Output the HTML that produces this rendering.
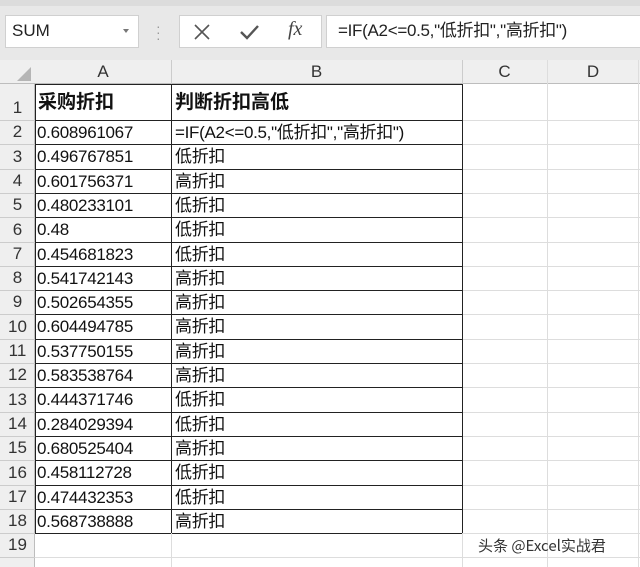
<!DOCTYPE html><html><head><meta charset="utf-8"><style>
html,body{margin:0;width:640px;height:567px;overflow:hidden}
body{background:#fff;font-family:"Liberation Sans","Noto Sans CJK SC",sans-serif;position:relative}
.a{position:absolute;box-sizing:border-box}
.t{font-size:17px;color:#111;white-space:nowrap;line-height:24px;height:24px}
.h{font-size:17px;color:#333;text-align:center}
</style></head><body>
<div class="a" style="left:0;top:0;width:640px;height:60px;background:#e8e8e8"></div>
<div class="a" style="left:0;top:0;width:640px;height:6px;background:#dcdcdc"></div>
<div class="a" style="left:5px;top:15px;width:134px;height:33px;background:#fff;border:1px solid #d0d0d0"></div>
<div class="a t" style="left:12px;top:19px;color:#222">SUM</div>
<div class="a" style="left:123px;top:29px;border-left:3px solid transparent;border-right:3px solid transparent;border-top:4px solid #777"></div>
<div class="a" style="left:156px;top:23px;color:#999;font-size:14px;line-height:6px">·<br>·<br>·</div>
<div class="a" style="left:179px;top:15px;width:143px;height:33px;background:#fff;border:1px solid #d0d0d0"></div>
<svg class="a" style="left:192px;top:22px" width="20" height="20"><path d="M3 3L17 17M17 3L3 17" stroke="#555" stroke-width="1.6"/></svg>
<svg class="a" style="left:238px;top:22px" width="24" height="20"><path d="M3 10L9 16L20 4" stroke="#555" stroke-width="2.4" fill="none"/></svg>
<div class="a" style="left:288px;top:18px;font-family:'Liberation Serif',serif;font-style:italic;font-size:20px;color:#444">fx</div>
<div class="a" style="left:326px;top:15px;width:320px;height:33px;background:#fff;border:1px solid #d0d0d0"></div>
<div class="a t" style="left:338px;top:19px;color:#222;letter-spacing:-0.3px">=IF(A2&lt;=0.5,"低折扣","高折扣")</div>
<div class="a" style="left:0;top:60px;width:640px;height:24px;background:#efefef;border-bottom:1px solid #bdbdbd"></div>
<div class="a" style="left:0;top:84px;width:35px;height:483px;background:#efefef;border-right:1px solid #bdbdbd"></div>
<svg class="a" style="left:16px;top:66px" width="16" height="16"><path d="M15 1L15 15L1 15Z" fill="#b5b5b5"/></svg>
<div class="a h" style="left:35px;top:62px;width:136px">A</div>
<div class="a h" style="left:171px;top:62px;width:291px">B</div>
<div class="a h" style="left:462px;top:62px;width:85px">C</div>
<div class="a h" style="left:547px;top:62px;width:92px">D</div>
<div class="a" style="left:171px;top:60px;height:24px;border-left:1px solid #ccc"></div>
<div class="a" style="left:462px;top:60px;height:24px;border-left:1px solid #ccc"></div>
<div class="a" style="left:547px;top:60px;height:507px;border-left:1px solid #ddd"></div>
<div class="a" style="left:638px;top:60px;height:507px;border-left:1px solid #ddd"></div>
<div id="g"></div>
<div class="a" style="left:478px;top:536px;font-size:15px;color:#333;font-family:'Noto Sans CJK SC',sans-serif;line-height:20px">头条 @Excel实战君</div>
<script>
var A=["0.608961067","0.496767851","0.601756371","0.480233101","0.48","0.454681823","0.541742143","0.502654355","0.604494785","0.537750155","0.583538764","0.444371746","0.284029394","0.680525404","0.458112728","0.474432353","0.568738888"];
var s="",T=[84,120];for(var i=2;i<=20;i++)T.push(120+(i-1)*24.3);
for(var r=1;r<=19;r++){var y=T[r-1],h=T[r]-y;
s+='<div class="a h" style="left:0;top:'+(y+h-24)+'px;width:35px;height:24px;line-height:24px;color:#333">'+r+'</div>';
if(r==18)s+='<div class="a" style="left:35px;top:'+(y+h)+'px;width:605px;border-top:1px solid #ddd"></div>';
else if(r<18)s+='<div class="a" style="left:462px;top:'+(y+h)+'px;width:178px;border-top:1px solid #ddd"></div>';
else s+='<div class="a" style="left:35px;top:'+(y+h)+'px;width:605px;border-top:1px solid #ddd"></div>';
s+='<div class="a" style="left:0;top:'+(y+h)+'px;width:35px;border-top:1px solid #ccc"></div>';
if(r==1){s+='<div class="a t" style="left:38px;top:91px;font-size:19px;font-weight:bold">采购折扣</div><div class="a t" style="left:175px;top:91px;font-size:19px;font-weight:bold">判断折扣高低</div>';}
else if(r<=18){var v=A[r-2];var b=r==2?'=IF(A2&lt;=0.5,"低折扣","高折扣")':(parseFloat(v)<=0.5?"低折扣":"高折扣");
s+='<div class="a t" style="left:37px;top:'+(y+1)+'px;letter-spacing:-0.3px">'+v+'</div><div class="a t" style="left:175px;top:'+(y+1)+'px;letter-spacing:-0.3px">'+b+'</div>';}}
s+='<div class="a" style="left:35px;top:84px;width:428px;height:'+(T[18]-84+1)+'px;border:1px solid #222"></div>';
s+='<div class="a" style="left:171px;top:84px;height:'+(T[18]-84)+'px;border-left:1px solid #222"></div>';
for(var r=1;r<18;r++)s+='<div class="a" style="left:35px;top:'+T[r]+'px;width:428px;border-top:1px solid #222"></div>';
s+='<div class="a" style="left:171px;top:'+T[18]+'px;height:'+(567-T[18])+'px;border-left:1px solid #ddd"></div><div class="a" style="left:462px;top:'+T[18]+'px;height:'+(567-T[18])+'px;border-left:1px solid #ddd"></div>';
document.getElementById("g").innerHTML=s;
</script>
</body></html>
